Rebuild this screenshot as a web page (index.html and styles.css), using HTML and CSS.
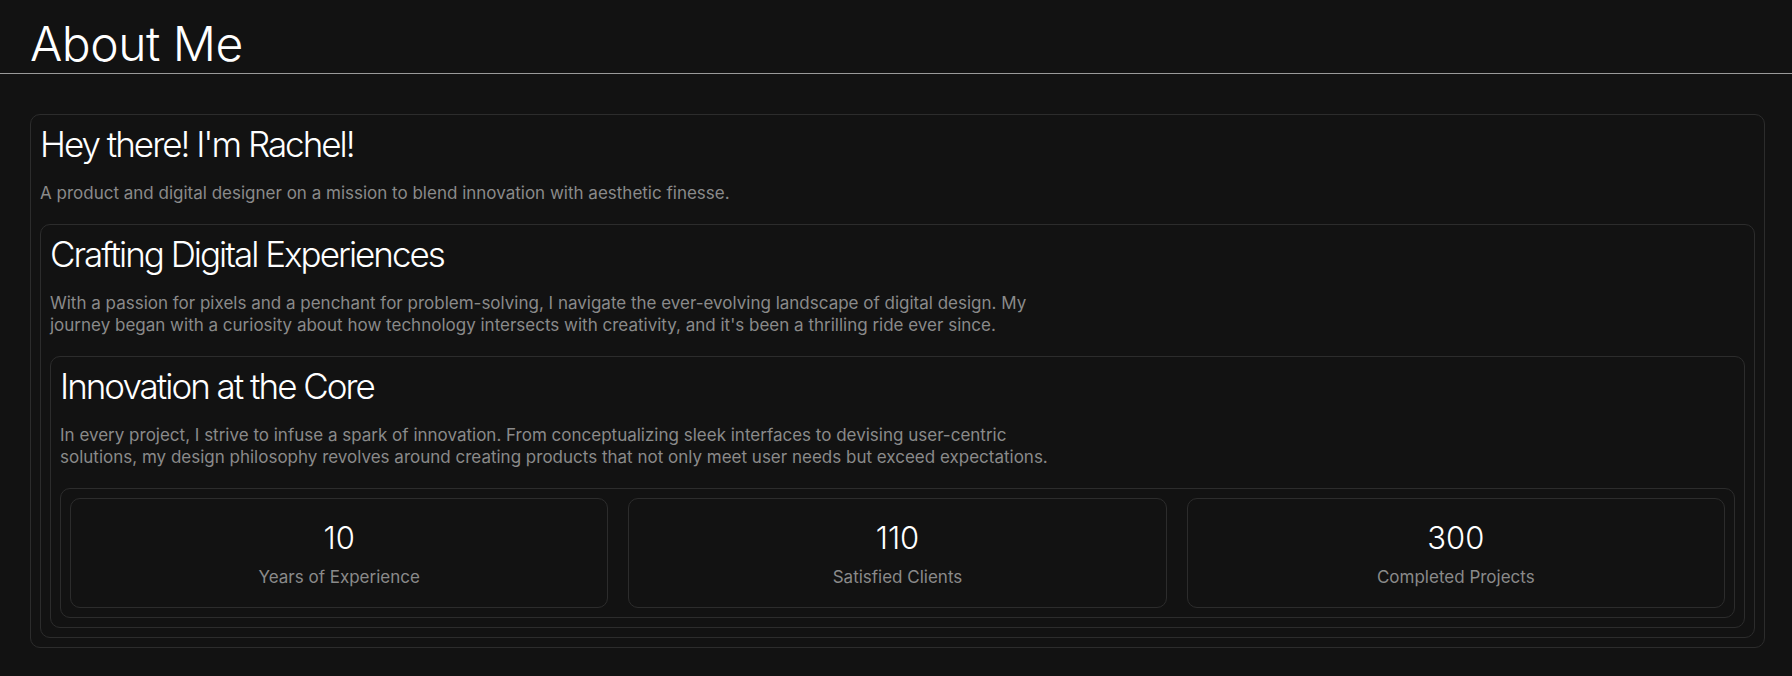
FILE: index.html
```html
<!DOCTYPE html>
<html lang="en">
<head>
<meta charset="utf-8">
<title>About Me</title>
<link rel="stylesheet" href="styles.css">
</head>
<body>
<header class="page-header">
  <h1 class="page-title">About Me</h1>
</header>
<main class="page-main">
  <section class="card">
    <h2 class="card-title">Hey there! I'm Rachel!</h2>
    <p class="card-text">A product and digital designer on a mission to blend innovation with aesthetic finesse.</p>
    <section class="card">
      <h2 class="card-title">Crafting Digital Experiences</h2>
      <p class="card-text">With a passion for pixels and a penchant for problem-solving, I navigate the ever-evolving landscape of digital design. My journey began with a curiosity about how technology intersects with creativity, and it's been a thrilling ride ever since.</p>
      <section class="card">
        <h2 class="card-title">Innovation at the Core</h2>
        <p class="card-text">In every project, I strive to infuse a spark of innovation. From conceptualizing sleek interfaces to devising user-centric solutions, my design philosophy revolves around creating products that not only meet user needs but exceed expectations.</p>
        <div class="card stats">
          <div class="stat">
            <div class="stat-num">10</div>
            <div class="stat-label">Years of Experience</div>
          </div>
          <div class="stat">
            <div class="stat-num">110</div>
            <div class="stat-label">Satisfied Clients</div>
          </div>
          <div class="stat">
            <div class="stat-num">300</div>
            <div class="stat-label">Completed Projects</div>
          </div>
        </div>
      </section>
    </section>
  </section>
</main>
</body>
</html>
```

FILE: styles.css
```css
* { box-sizing: border-box; }

html, body {
  margin: 0;
  padding: 0;
  background: #121212;
  color: #ffffff;
  font-family: "Inter", "Noto Sans", sans-serif;
}

.page-header {
  padding: 15px 30px 0 30px;
  border-bottom: 1px solid #9a9a9a;
}

.page-title {
  margin: 0;
  font-size: 48px;
  font-weight: 300;
  line-height: 58px;
  letter-spacing: -0.5px;
}

.page-main {
  padding: 40px 27px 28px 30px;
}

.card {
  border: 1px solid #2c2c2c;
  border-radius: 10px;
  padding: 9px;
}

.card-title {
  margin: 0 0 18px 0;
  font-size: 35px;
  font-weight: 300;
  line-height: 40px;
  letter-spacing: -2px;
}

.card-text {
  margin: 0 0 20px 0;
  max-width: 1010px;
  font-size: 17px;
  line-height: 22px;
  color: #8a8a8a;
}

.stats {
  display: grid;
  grid-template-columns: repeat(3, 1fr);
  gap: 20px;
}

.stat {
  border: 1px solid #2c2c2c;
  border-radius: 10px;
  height: 110px;
  display: flex;
  flex-direction: column;
  align-items: center;
  justify-content: center;
}

.stat-num {
  font-size: 31px;
  font-weight: 300;
  line-height: 38px;
}

.stat-label {
  margin-top: 9px;
  font-size: 17px;
  line-height: 22px;
  color: #8a8a8a;
}
```
